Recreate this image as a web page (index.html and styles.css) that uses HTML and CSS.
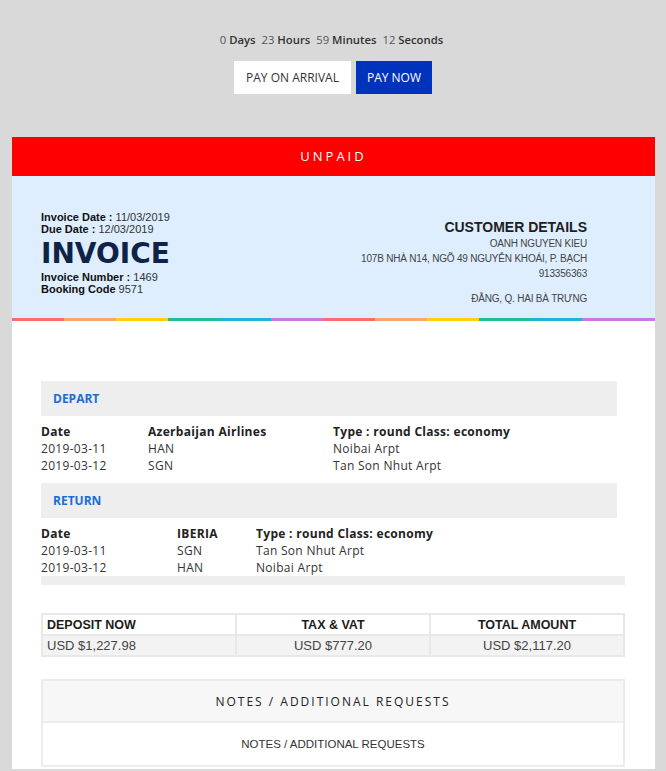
FILE: index.html
```html
<!DOCTYPE html>
<html lang="vi">
<head>
<meta charset="utf-8">
<title>Invoice</title>
<link rel="stylesheet" href="styles.css">
</head>
<body>
<div class="countdown">
  <span class="num">0</span> <span class="lbl">Days</span>
  <span class="num">23</span> <span class="lbl">Hours</span>
  <span class="num">59</span> <span class="lbl">Minutes</span>
  <span class="num">12</span> <span class="lbl">Seconds</span>
</div>
<div class="actions">
  <button class="btn btn-light">PAY ON ARRIVAL</button>
  <button class="btn btn-primary">PAY NOW</button>
</div>

<div class="invoice">
  <div class="status">UNPAID</div>
  <div class="head">
    <div class="head-left">
      <div class="meta"><b>Invoice Date :</b> 11/03/2019</div>
      <div class="meta"><b>Due Date :</b> 12/03/2019</div>
      <h1 class="title">INVOICE</h1>
      <div class="meta"><b>Invoice Number :</b> 1469</div>
      <div class="meta"><b>Booking Code</b> 9571</div>
    </div>
    <div class="head-right">
      <h2 class="cust-title">CUSTOMER DETAILS</h2>
      <div class="cust-line">OANH NGUYEN KIEU</div>
      <div class="cust-line">107B NHÀ N14, NGÕ 49 NGUYỄN KHOÁI, P. BẠCH</div>
      <div class="cust-line">913356363</div>
      <div class="cust-line cust-gap">ĐẰNG, Q. HAI BÀ TRƯNG</div>
    </div>
  </div>
  <div class="stripe">
    <span class="s1"></span><span class="s2"></span><span class="s3"></span><span class="s4"></span><span class="s5"></span><span class="s6"></span>
    <span class="s1"></span><span class="s2"></span><span class="s3"></span><span class="s4"></span><span class="s5"></span><span class="s6 last"></span>
  </div>

  <div class="content">
    <div class="leg-title">DEPART</div>
    <div class="leg leg-depart">
      <div class="th">Date</div><div class="th">Azerbaijan Airlines</div><div class="th">Type : round Class: economy</div>
      <div>2019-03-11</div><div>HAN</div><div>Noibai Arpt</div>
      <div>2019-03-12</div><div>SGN</div><div>Tan Son Nhut Arpt</div>
    </div>
    <div class="leg-title">RETURN</div>
    <div class="leg leg-return">
      <div class="th">Date</div><div class="th">IBERIA</div><div class="th">Type : round Class: economy</div>
      <div>2019-03-11</div><div>SGN</div><div>Tan Son Nhut Arpt</div>
      <div>2019-03-12</div><div>HAN</div><div>Noibai Arpt</div>
    </div>
    <div class="leg-foot"></div>

    <table class="totals">
      <tr>
        <th class="left">DEPOSIT NOW</th>
        <th>TAX &amp; VAT</th>
        <th>TOTAL AMOUNT</th>
      </tr>
      <tr>
        <td class="left">USD $1,227.98</td>
        <td>USD $777.20</td>
        <td>USD $2,117.20</td>
      </tr>
    </table>

    <div class="notes">
      <div class="notes-head">NOTES / ADDITIONAL REQUESTS</div>
      <div class="notes-body">NOTES / ADDITIONAL REQUESTS</div>
    </div>
  </div>
</div>
</body>
</html>
```

FILE: styles.css
```css
* { box-sizing: border-box; }

body {
  margin: 0;
  background: #d9d9d9;
  font-family: "Open Sans", "Noto Sans", sans-serif;
  color: #333;
}

.countdown {
  padding-top: 32px;
  text-align: center;
  font-size: 11.3px;
  line-height: 16px;
}
.countdown .num { color: #555; }
.countdown .lbl { color: #333; font-weight: 600; margin-right: 3px; }

.actions {
  display: flex;
  justify-content: center;
  gap: 5px;
  margin-top: 13px;
}
.btn {
  font-family: "Open Sans", sans-serif;
  font-size: 12px;
  height: 33px;
  border: none;
  padding: 0;
  white-space: nowrap;
  cursor: pointer;
}
.btn-light { background: #fff; color: #333; width: 117px; }
.btn-primary { background: #0033bb; color: #fff; width: 76px; }

.invoice {
  margin: 43px 11px 0 12px;
  background: #fff;
}

.status {
  background: #ff0000;
  color: #fff;
  height: 39px;
  line-height: 39px;
  text-align: center;
  font-size: 13px;
  letter-spacing: 3px;
}

.head {
  background: #deeefe;
  display: flex;
  justify-content: space-between;
  align-items: flex-start;
  padding: 35px 68px 12px 29px;
}
.meta {
  font-family: "Liberation Sans", Arial, sans-serif;
  font-size: 11px;
  line-height: 12px;
  color: #333;
}
.meta b { color: #111; }
.title {
  margin: 0;
  font-family: "DejaVu Sans", Verdana, sans-serif;
  font-weight: bold;
  font-size: 28px;
  line-height: 30px;
  color: #0f2347;
  padding: 4px 0 2px;
}
.head-right {
  text-align: right;
  font-family: "Liberation Sans", Arial, sans-serif;
  padding-top: 8px;
}
.cust-title {
  margin: 0 0 1px;
  font-size: 14px;
  line-height: 16px;
  font-weight: bold;
  color: #1e1e1e;
}
.cust-line {
  font-size: 10px;
  letter-spacing: -0.2px;
  line-height: 15px;
  color: #444;
}
.cust-gap { margin-top: 10px; }

.stripe {
  display: flex;
  height: 3px;
}
.stripe span { flex: 1; }
.stripe .last { flex: 1.4; }
.s1 { background: #fc6b6e; }
.s2 { background: #f8a56f; }
.s3 { background: #fdd20a; }
.s4 { background: #22bc97; }
.s5 { background: #1fb5d9; }
.s6 { background: #c47ae6; }

.content {
  padding: 60px 30px 2px 29px;
}

.leg-title {
  width: 576px;
  height: 35px;
  line-height: 35px;
  background: #eeeeee;
  padding-left: 12px;
  font-size: 12px;
  font-weight: 700;
  color: #1a6dd6;
}

.leg {
  display: grid;
  font-size: 12px;
  letter-spacing: 0.3px;
  line-height: 17px;
  color: #333;
  padding-top: 7px;
}
.leg-depart { grid-template-columns: 107px 185px 1fr; margin-bottom: 9px; }
.leg-return { grid-template-columns: 136px 79px 1fr; }
.leg .th { font-weight: 700; color: #222; }

.leg-foot {
  height: 9px;
  background: #eeeeee;
}

.totals {
  width: 100%;
  margin-top: 28px;
  border-collapse: collapse;
  table-layout: fixed;
  font-family: "Liberation Sans", Arial, sans-serif;
  color: #222;
}
.totals th, .totals td {
  border: 2px solid #e8e8e8;
  text-align: center;
  padding: 0 4px;
}
.totals th {
  height: 21px;
  font-size: 12.5px;
  font-weight: bold;
  color: #1c1c1c;
  background: #fff;
}
.totals td {
  height: 21px;
  font-size: 13px;
  background: #f3f3f3;
  color: #444;
}
.totals .left { text-align: left; }

.notes {
  margin-top: 22px;
  border: 2px solid #ececec;
}
.notes-head {
  height: 42px;
  line-height: 42px;
  background: #f7f7f7;
  text-align: center;
  font-size: 12px;
  letter-spacing: 2px;
  color: #222;
  border-bottom: 2px solid #ececec;
}
.notes-body {
  height: 42px;
  line-height: 42px;
  text-align: center;
  font-family: "Liberation Sans", Arial, sans-serif;
  font-size: 11.5px;
  color: #333;
}
```
